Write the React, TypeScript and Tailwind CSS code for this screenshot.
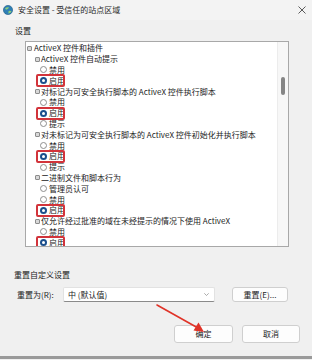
import React from 'react'

type Row = {
  level: 0 | 1 | 2
  text: string
  radio?: boolean
  checked?: boolean
  mark?: boolean
}

const rows: Row[] = [
  { level: 0, text: 'ActiveX 控件和插件' },
  { level: 1, text: 'ActiveX 控件自动提示' },
  { level: 2, radio: true, text: '禁用' },
  { level: 2, radio: true, checked: true, mark: true, text: '启用' },
  { level: 1, text: '对标记为可安全执行脚本的 ActiveX 控件执行脚本' },
  { level: 2, radio: true, text: '禁用' },
  { level: 2, radio: true, checked: true, mark: true, text: '启用' },
  { level: 2, radio: true, text: '提示' },
  { level: 1, text: '对未标记为可安全执行脚本的 ActiveX 控件初始化并执行脚本' },
  { level: 2, radio: true, text: '禁用' },
  { level: 2, radio: true, checked: true, mark: true, text: '启用' },
  { level: 2, radio: true, text: '提示' },
  { level: 1, text: '二进制文件和脚本行为' },
  { level: 2, radio: true, text: '管理员认可' },
  { level: 2, radio: true, text: '禁用' },
  { level: 2, radio: true, checked: true, mark: true, text: '启用' },
  { level: 1, text: '仅允许经过批准的域在未经提示的情况下使用 ActiveX' },
  { level: 2, radio: true, text: '禁用' },
  { level: 2, radio: true, checked: true, mark: true, text: '启用' },
]

function NodeIcon() {
  return (
    <span className="w-[5px] h-[5px] shrink-0 border border-[#8c8c8c] bg-[#d8d8d8] rounded-[1px]" />
  )
}

function Radio({ checked }: { checked?: boolean }) {
  if (checked) {
    return (
      <span className="w-[7px] h-[7px] shrink-0 rounded-full bg-[#1b4f8c] flex items-center justify-center">
        <span className="w-[3px] h-[3px] rounded-full bg-white" />
      </span>
    )
  }
  return <span className="w-[7px] h-[7px] shrink-0 rounded-full border border-[#8e8e8e] bg-white" />
}

function TreeRow({ row }: { row: Row }) {
  if (row.radio) {
    return (
      <div className="relative h-[10.8px] flex items-center pl-[14px] whitespace-nowrap">
        <Radio checked={row.checked} />
        <span className="ml-[2px]">{row.text}</span>
        {row.mark && (
          <span className="absolute left-[10px] top-[-1px] w-[29px] h-[13px] border-2 border-[#d2343b] rounded-[2px]" />
        )}
      </div>
    )
  }
  return (
    <div
      className={`h-[10.8px] flex items-center whitespace-nowrap ${
        row.level === 0 ? 'pl-[1px] gap-[2px]' : 'pl-[9px] gap-[1px]'
      }`}
    >
      <NodeIcon />
      <span>{row.text}</span>
    </div>
  )
}

function Button({ label, className }: { label: string; className: string }) {
  return (
    <div
      className={`flex items-center justify-center bg-[#fdfdfd] border border-[#cfcfcf] rounded-[3px] text-[8px] text-[#222] ${className}`}
    >
      {label}
    </div>
  )
}

export default function App() {
  return (
    <div
      className="relative w-[312px] h-[360px] overflow-hidden bg-[#f0f0f0] text-[#222]"
      style={{ fontFamily: '"Noto Sans CJK SC", "Noto Sans", sans-serif' }}
    >
      {/* Title bar */}
      <div className="h-[20px] flex items-center pl-[3px] pr-[6px] bg-[#f3f3f3]">
        <svg width="10" height="10" viewBox="0 0 10 10" className="shrink-0">
          <circle cx="5" cy="5" r="4.6" fill="#2f7fb5" />
          <path d="M2 3.2 Q4 1.6 6.2 2.6 Q5 4.4 3 4.8 Z" fill="#8fcf7a" />
          <path d="M5.6 6 Q7.6 5.4 8.6 6.6 Q7.4 8.6 5.4 8.4 Z" fill="#8fcf7a" />
          <circle cx="5" cy="5" r="4.6" fill="none" stroke="#1c5a86" strokeWidth="0.6" />
        </svg>
        <span className="ml-[5px] text-[8px] leading-none text-[#2a2a2a]">安全设置 - 受信任的站点区域</span>
        <svg width="8" height="8" viewBox="0 0 8 8" className="ml-auto">
          <path d="M0.5 0.5 L7.5 7.5 M7.5 0.5 L0.5 7.5" stroke="#333" strokeWidth="0.8" />
        </svg>
      </div>

      {/* 设置 */}
      <div className="mt-[6px] pl-[15px] h-[10px] leading-[10px] text-[8px]">设置</div>

      <div className="mt-[5px] ml-[25px] w-[264px] h-[206px] border border-[#a8a8a8] bg-white flex overflow-hidden">
        <div className="flex-1 pt-[1px] text-[8px] leading-none overflow-hidden">
          {rows.map((r, i) => (
            <TreeRow key={i} row={r} />
          ))}
        </div>
        <div className="w-[11px] bg-[#f7f7f7] border-l border-[#ececec] pt-[35px] flex justify-center">
          <div className="w-[4px] h-[18px] rounded-[2px] bg-[#858585]" />
        </div>
      </div>

      {/* 重置自定义设置 */}
      <div className="mt-[23px] pl-[14px] h-[10px] leading-[10px] text-[8px]">重置自定义设置</div>
      <div className="mt-[7px] h-[15px] flex items-center text-[8px]">
        <span className="pl-[17px] w-[63px]">重置为(R):</span>
        <div className="w-[152px] h-[15px] bg-white border border-[#e2e2e2] border-b-[#8a8a8a] rounded-[2px] flex items-center pl-[4px] pr-[5px]">
          <span>中 (默认值)</span>
          <svg width="5" height="3" viewBox="0 0 5 3" className="ml-auto">
            <path d="M0.3 0.3 L2.5 2.5 L4.7 0.3" stroke="#888" strokeWidth="0.7" fill="none" />
          </svg>
        </div>
        <Button label="重置(E)..." className="ml-[17px] w-[56px] h-[15px]" />
      </div>

      {/* OK / Cancel */}
      <div className="mt-[23px] h-[18px] flex">
        <Button label="确定" className="ml-[174px] w-[59px] h-[18px] border-[#b9c6d6]" />
        <Button label="取消" className="ml-[9px] w-[58px] h-[18px]" />
      </div>

      <div className="mt-[13px] h-[3px] bg-[#9a9a9a]" />

      {/* red annotation arrow */}
      <svg
        className="absolute left-0 top-0 pointer-events-none"
        width="312"
        height="360"
        viewBox="0 0 312 360"
      >
        <line x1="157" y1="305" x2="198" y2="328" stroke="#e03328" strokeWidth="1.6" strokeLinecap="round" />
        <path d="M204 332 L193.5 330.5 L198.5 322.5 Z" fill="#e03328" />
      </svg>
    </div>
  )
}
